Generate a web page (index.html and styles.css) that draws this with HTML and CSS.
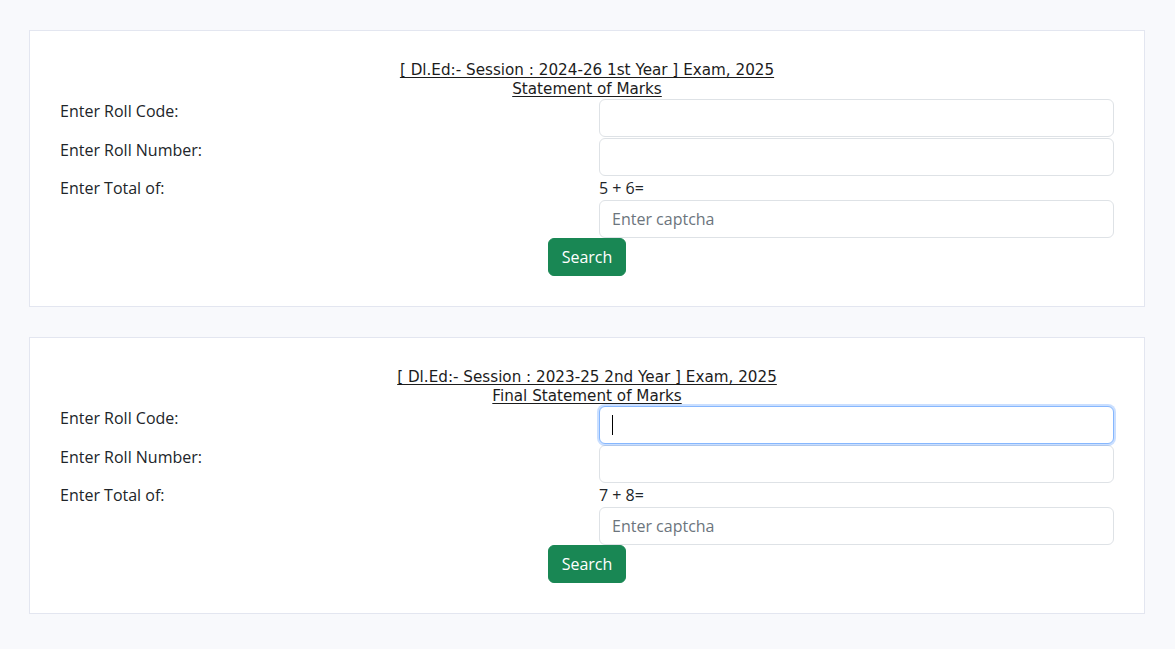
FILE: index.html
```html
<!DOCTYPE html>
<html lang="en">
<head>
<meta charset="utf-8">
<title>Statement of Marks</title>
<link rel="stylesheet" href="styles.css">
</head>
<body>
<main class="page">
  <section class="card">
    <h2 class="exam-title"><a href="#">[ Dl.Ed:- Session : 2024-26 1st Year ] Exam, 2025<br>Statement of Marks</a></h2>
    <form class="result-form">
      <div class="form-row">
        <label class="form-label">Enter Roll Code:</label>
        <div class="form-field"><input class="form-control" type="text"></div>
      </div>
      <div class="form-row">
        <label class="form-label">Enter Roll Number:</label>
        <div class="form-field"><input class="form-control" type="text"></div>
      </div>
      <div class="form-row">
        <label class="form-label">Enter Total of:</label>
        <div class="form-field">
          <div class="captcha-sum">5 + 6=</div>
          <input class="form-control" type="text" placeholder="Enter captcha">
        </div>
      </div>
      <div class="form-actions"><button class="btn-search" type="button">Search</button></div>
    </form>
  </section>

  <section class="card">
    <h2 class="exam-title"><a href="#">[ Dl.Ed:- Session : 2023-25 2nd Year ] Exam, 2025<br>Final Statement of Marks</a></h2>
    <form class="result-form">
      <div class="form-row">
        <label class="form-label">Enter Roll Code:</label>
        <div class="form-field">
          <div class="input-wrap">
            <input class="form-control is-focused" type="text">
            <span class="caret"></span>
          </div>
        </div>
      </div>
      <div class="form-row">
        <label class="form-label">Enter Roll Number:</label>
        <div class="form-field"><input class="form-control" type="text"></div>
      </div>
      <div class="form-row">
        <label class="form-label">Enter Total of:</label>
        <div class="form-field">
          <div class="captcha-sum">7 + 8=</div>
          <input class="form-control" type="text" placeholder="Enter captcha">
        </div>
      </div>
      <div class="form-actions"><button class="btn-search" type="button">Search</button></div>
    </form>
  </section>
</main>
</body>
</html>
```

FILE: styles.css
```css
* { box-sizing: border-box; }

html, body {
  margin: 0;
  background: #f8f9fc;
}

body {
  font-family: "Open Sans", "Noto Sans", sans-serif;
  font-size: 16px;
  line-height: 24px;
  color: #212529;
}

.page {
  padding: 30px 30px 30px 29px;
  display: flex;
  flex-direction: column;
  gap: 30px;
}

.card {
  background: #fff;
  border: 1px solid #e3e6f0;
  padding: 30px;
}

.exam-title {
  margin: 0;
  text-align: center;
  font-family: "DejaVu Sans", "Noto Sans", sans-serif;
  font-weight: 400;
  font-size: 15.2px;
  line-height: 19px;
}

.exam-title a {
  color: #1c1c1c;
  text-decoration: underline;
  text-underline-offset: 2px;
}

.form-row {
  display: grid;
  grid-template-columns: 1fr 1fr;
  column-gap: 24px;
}

.form-row:first-child {
  margin-bottom: 1px;
}

.form-label {
  display: block;
}

.form-field {
  display: flex;
  flex-direction: column;
}

.captcha-sum {
  line-height: 24px;
}

.input-wrap {
  position: relative;
}

.form-control {
  display: block;
  width: 100%;
  height: 38px;
  padding: 6px 12px;
  font-family: inherit;
  font-size: 16px;
  color: #212529;
  background: #fff;
  border: 1px solid #dee2e6;
  border-radius: 6px;
  outline: none;
}

.form-control::placeholder {
  color: #6c757d;
}

.form-control.is-focused {
  border-color: #86b7fe;
  box-shadow: 0 0 0 2px rgba(13, 110, 253, 0.22);
}

.caret {
  position: absolute;
  left: 13px;
  top: 9px;
  width: 1px;
  height: 20px;
  background: #000;
}

.form-actions {
  text-align: center;
}

.btn-search {
  height: 38px;
  padding: 0 12.5px;
  font-family: inherit;
  font-size: 16px;
  color: #fff;
  background: #198754;
  border: 1px solid #198754;
  border-radius: 6px;
}
```
